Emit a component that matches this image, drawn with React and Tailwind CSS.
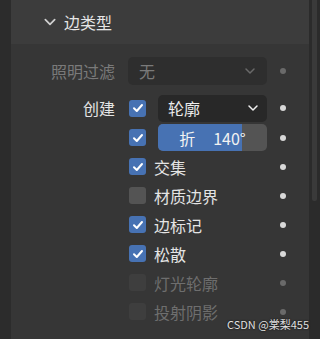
import React from "react";

const font = { fontFamily: '"Noto Sans CJK SC", "Noto Sans", sans-serif' };

function Check({ on, dim }) {
  if (on) {
    return (
      <div className="w-[17px] h-[17px] rounded-[3px] bg-[#4772b3] flex items-center justify-center shrink-0">
        <svg width="12" height="12" viewBox="0 0 12 12">
          <path d="M2 6.3 L4.8 9 L10 3" fill="none" stroke="#fff" strokeWidth="2" strokeLinecap="round" strokeLinejoin="round" />
        </svg>
      </div>
    );
  }
  return <div className={`w-[17px] h-[17px] rounded-[3px] shrink-0 ${dim ? "bg-[#3e3e3e]" : "bg-[#545454]"}`} />;
}

function Dot({ dim }) {
  return <div className={`w-[6px] h-[6px] rounded-full ${dim ? "bg-[#6a6a6a]" : "bg-[#d8d8d8]"}`} />;
}

function Chevron({ color, size = 12 }) {
  return (
    <svg width={size} height={size} viewBox="0 0 12 12">
      <path d="M2 4 L6 8 L10 4" fill="none" stroke={color} strokeWidth="1.5" strokeLinecap="round" strokeLinejoin="round" />
    </svg>
  );
}

function CheckRow({ label, on, dim }) {
  return (
    <div className="h-[29px] flex items-center">
      <div className="w-[118px]" />
      <Check on={on} dim={dim} />
      <span className={`ml-[8px] text-[16px] leading-none ${dim ? "text-[#6e6e6e]" : "text-[#e4e4e4]"}`}>{label}</span>
      <div className="flex-1" />
      <Dot dim={dim} />
      <div className="w-[23px]" />
    </div>
  );
}

export default function App() {
  return (
    <div className="relative w-[320px] h-[339px] bg-[#2b2b2b] flex overflow-hidden" style={font}>
      <div className="w-[11px] bg-[#2c2c2c]" />
      <div className="w-[298px] flex flex-col bg-[#363636]">
        {/* header */}
        <div className="h-[44px] bg-[#3c3c3c] flex items-center pl-[32px] shrink-0">
          <Chevron color="#cfcfcf" size={14} />
          <span className="ml-[7px] text-[16px] text-[#e6e6e6] leading-none">边类型</span>
        </div>

        <div className="flex flex-col pt-[13px]">
          {/* lighting filter */}
          <div className="h-[28px] flex items-center">
            <div className="w-[104px] text-right text-[16px] text-[#7a7a7a] leading-none">照明过滤</div>
            <div className="w-[13px]" />
            <div className="w-[139px] h-[28px] rounded-[5px] bg-[#2e2e2e] flex items-center px-[11px] justify-between">
              <span className="text-[16px] text-[#7a7a7a] leading-none">无</span>
              <Chevron color="#6a6a6a" />
            </div>
            <div className="flex-1" />
            <Dot dim />
            <div className="w-[23px]" />
          </div>

          <div className="h-[9px]" />

          {/* create */}
          <div className="h-[28px] flex items-center">
            <div className="w-[104px] text-right text-[16px] text-[#e4e4e4] leading-none">创建</div>
            <div className="w-[14px]" />
            <Check on />
            <div className="w-[12px]" />
            <div className="w-[109px] h-[27px] rounded-[5px] bg-[#282828] flex items-center pl-[10px] pr-[8px] justify-between">
              <span className="text-[16px] text-[#ececec] leading-none">轮廓</span>
              <Chevron color="#f0f0f0" />
            </div>
            <div className="flex-1" />
            <Dot />
            <div className="w-[23px]" />
          </div>

          {/* crease */}
          <div className="h-[29px] flex items-center mt-[1px]">
            <div className="w-[118px]" />
            <Check on />
            <div className="w-[12px]" />
            <div className="w-[109px] h-[27px] rounded-[5px] bg-[#545454] overflow-hidden relative flex">
              <div className="w-[84px] h-full bg-[#4772b3]" />
              <div className="absolute inset-0 flex items-center justify-center text-[16px] text-[#f2f2f2] leading-none">
                <span>折</span>
                <span className="ml-[18px]">140°</span>
              </div>
            </div>
            <div className="flex-1" />
            <Dot />
            <div className="w-[23px]" />
          </div>

          <CheckRow label="交集" on />
          <CheckRow label="材质边界" />
          <CheckRow label="边标记" on />
          <CheckRow label="松散" on />
          <CheckRow label="灯光轮廓" dim />
          <CheckRow label="投射阴影" dim />
        </div>
      </div>
      <div className="w-[3px] bg-[#2b2b2b]" />
      <div className="w-[5px] flex flex-col">
        <div className="h-[201px] bg-[#3a3a3a] rounded-b-[2px]" />
      </div>
      <div className="flex-1 bg-[#2b2b2b]" />
      <div className="absolute left-[227px] top-[319px] text-[11px] text-[#e0e0e0] leading-none" style={{ textShadow: "0 0 2px #000" }}>
        CSDN @棠梨455
      </div>
    </div>
  );
}
